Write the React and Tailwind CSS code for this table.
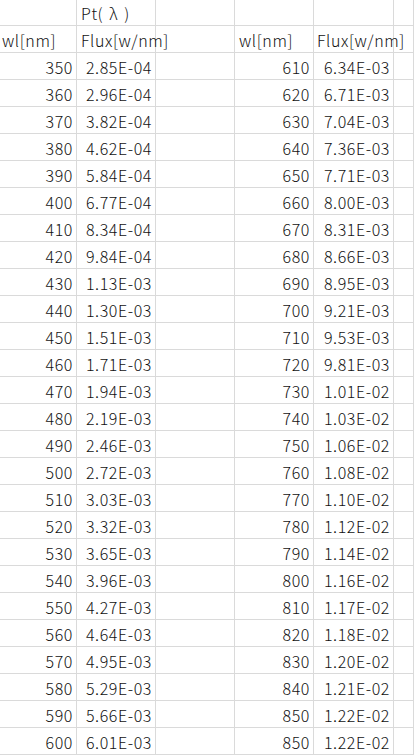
import React from "react";

const left = [
    ["350", "2.85E-04"],
    ["360", "2.96E-04"],
    ["370", "3.82E-04"],
    ["380", "4.62E-04"],
    ["390", "5.84E-04"],
    ["400", "6.77E-04"],
    ["410", "8.34E-04"],
    ["420", "9.84E-04"],
    ["430", "1.13E-03"],
    ["440", "1.30E-03"],
    ["450", "1.51E-03"],
    ["460", "1.71E-03"],
    ["470", "1.94E-03"],
    ["480", "2.19E-03"],
    ["490", "2.46E-03"],
    ["500", "2.72E-03"],
    ["510", "3.03E-03"],
    ["520", "3.32E-03"],
    ["530", "3.65E-03"],
    ["540", "3.96E-03"],
    ["550", "4.27E-03"],
    ["560", "4.64E-03"],
    ["570", "4.95E-03"],
    ["580", "5.29E-03"],
    ["590", "5.66E-03"],
    ["600", "6.01E-03"],
];

const right = [
    ["610", "6.34E-03"],
    ["620", "6.71E-03"],
    ["630", "7.04E-03"],
    ["640", "7.36E-03"],
    ["650", "7.71E-03"],
    ["660", "8.00E-03"],
    ["670", "8.31E-03"],
    ["680", "8.66E-03"],
    ["690", "8.95E-03"],
    ["700", "9.21E-03"],
    ["710", "9.53E-03"],
    ["720", "9.81E-03"],
    ["730", "1.01E-02"],
    ["740", "1.03E-02"],
    ["750", "1.06E-02"],
    ["760", "1.08E-02"],
    ["770", "1.10E-02"],
    ["780", "1.12E-02"],
    ["790", "1.14E-02"],
    ["800", "1.16E-02"],
    ["810", "1.17E-02"],
    ["820", "1.18E-02"],
    ["830", "1.20E-02"],
    ["840", "1.21E-02"],
    ["850", "1.22E-02"],
    ["850", "1.22E-02"],
];

const widths = ["w-[77px]", "w-[79px]", "w-[79px]", "w-[79px]", "w-[80px]", "flex-1"];

function Cell({ idx, align = "left", pad = "", children }) {
    return (
        <div
            className={`${widths[idx]} shrink-0 h-full border-r border-[#dadada] flex items-center pt-[1px] whitespace-nowrap ${
                align === "right" ? "justify-end pr-[3px]" : "justify-start"
            } ${pad}`}
        >
            {children}
        </div>
    );
}

function Row({ cells, first }) {
    return (
        <div
            className={`flex border-b border-[#dadada] ${
                first ? "h-[26px]" : "h-[27px]"
            }`}
        >
            {cells}
        </div>
    );
}

export default function App() {
    return (
        <div
            className="w-[414px] h-[755px] overflow-hidden bg-white text-[16px] font-light tracking-[0.6px] text-[#111] leading-none"
            style={{ fontFamily: '"Noto Sans CJK JP", "Noto Sans", sans-serif' }}
        >
            <Row
                first
                cells={
                    <>
                        <Cell idx={0} />
                        <Cell idx={1} pad="pl-[4px]">
                            Pt(<span className="mx-[6px]">λ</span>)
                        </Cell>
                        <Cell idx={2} />
                        <Cell idx={3} />
                        <Cell idx={4} />
                        <Cell idx={5} />
                    </>
                }
            />
            <Row
                cells={
                    <>
                        <Cell idx={0} pad="pl-[2px]">wl[nm]</Cell>
                        <Cell idx={1} pad="pl-[4px]">Flux[w/nm]</Cell>
                        <Cell idx={2} />
                        <Cell idx={3} pad="pl-[4px]">wl[nm]</Cell>
                        <Cell idx={4} pad="pl-[3px]">Flux[w/nm]</Cell>
                        <Cell idx={5} />
                    </>
                }
            />
            {left.map((l, i) => (
                <Row
                    key={i}
                    cells={
                        <>
                            <Cell idx={0} align="right">{l[0]}</Cell>
                            <Cell idx={1} align="right">{l[1]}</Cell>
                            <Cell idx={2} />
                            <Cell idx={3} align="right">{right[i][0]}</Cell>
                            <Cell idx={4} align="right">{right[i][1]}</Cell>
                            <Cell idx={5} />
                        </>
                    }
                />
            ))}
        </div>
    );
}
